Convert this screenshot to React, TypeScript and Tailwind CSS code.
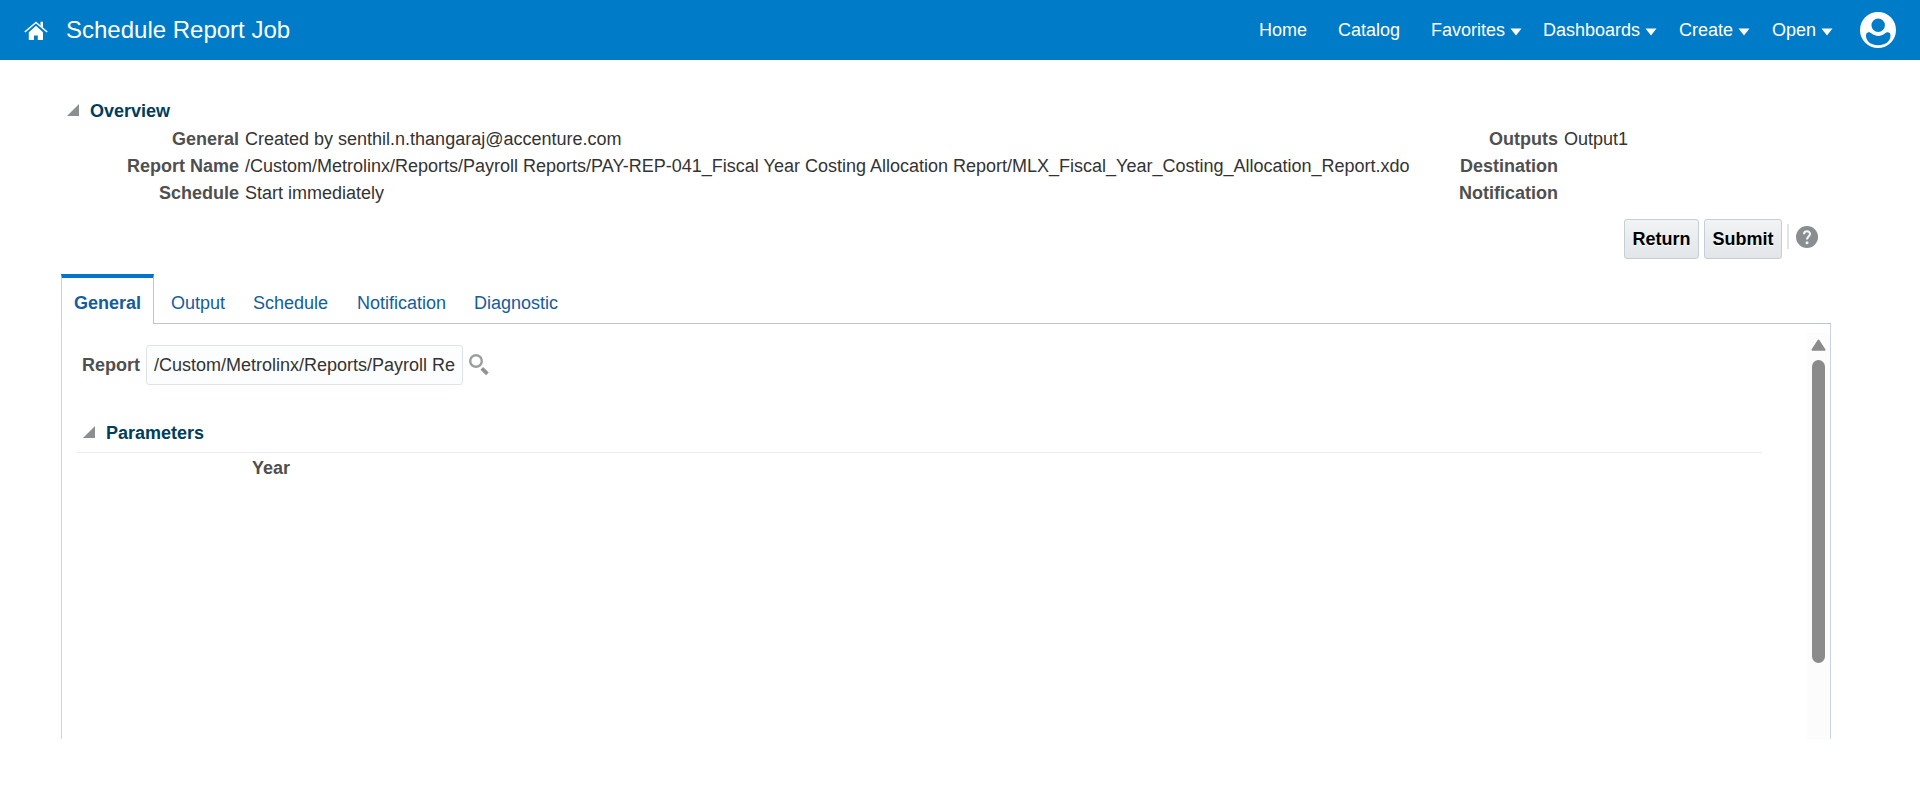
import React from "react";

const Caret = () => (
  <svg width="12" height="8" viewBox="0 0 12 8" className="mt-[3px] ml-[4.5px] shrink-0">
    <path d="M0.5 0.5H11.5L6 7.5Z" fill="#fff" />
  </svg>
);

const Disclosure = () => (
  <svg width="12" height="12" viewBox="0 0 12 12" className="shrink-0">
    <path d="M12 0V12H0Z" fill="#8b8f92" />
  </svg>
);

const NavItem = ({ label, menu, className }: { label: string; menu?: boolean; className: string }) => (
  <a className={`flex shrink-0 items-center whitespace-nowrap ${className}`}>
    {label}
    {menu && <Caret />}
  </a>
);

const Row = ({ label, value }: { label: string; value?: string }) => (
  <>
    <dt className="text-right font-bold text-[#4f4f4f]">{label}</dt>
    <dd className="whitespace-nowrap text-[#333]">{value}</dd>
  </>
);

const Tab = ({ label, className }: { label: string; className: string }) => (
  <a className={`pt-4 text-[#145c9e] ${className}`}>{label}</a>
);

export default function App() {
  return (
    <div className="h-[800px] w-[1920px] overflow-hidden bg-white font-['Liberation_Sans',Arial,sans-serif] text-[18px] leading-[27px] text-[#333]">
      <header className="flex h-[60px] items-center bg-[#007bc8] pl-6 text-white">
        <svg width="24" height="20" viewBox="0 0 24 20" className="mt-0.5 shrink-0">
          <path d="M12 4.8L19 11.2V19H13.8V14.5H10V19H4.8V11.2Z" fill="#fff" />
          <path d="M0.8 11L12 1.5L23.2 11" fill="none" stroke="#fff" strokeWidth="1.6" />
          <path d="M16.5 0.8H19V6.5L16.5 4.3Z" fill="#fff" />
        </svg>
        <h1 className="mb-0.5 ml-[18px] w-[1193px] text-[24px]">Schedule Report Job</h1>
        <NavItem label="Home" className="w-[79px]" />
        <NavItem label="Catalog" className="w-[93px]" />
        <NavItem label="Favorites" menu className="w-[112px]" />
        <NavItem label="Dashboards" menu className="w-[136px]" />
        <NavItem label="Create" menu className="w-[93px]" />
        <NavItem label="Open" menu className="w-[88px]" />
        <svg width="36" height="36" viewBox="0 0 36 36" className="shrink-0">
          <circle cx="18" cy="18" r="18" fill="#fff" />
          <circle cx="18.2" cy="13.3" r="6.7" fill="#007bc8" />
          <path d="M6 23.5C6 19.5 10 19.3 12 21.8C15.5 24.6 21 24.6 24.5 21.8C26.5 19.3 30.5 19.5 30.5 23.5C30.5 29.5 25 33.3 18.2 33.3S6 29.5 6 23.5Z" fill="#007bc8" />
        </svg>
      </header>

      <main className="pt-[38px] pr-[89px] pl-[61px]">
        <section>
          <h2 className="flex h-[27px] items-start pl-[6px] font-bold text-[#003d5b]">
            <span className="mt-[5.5px] mr-[11px]"><Disclosure /></span>
            Overview
          </h2>
          <div className="flex">
            <dl className="mt-px grid w-[1349px] grid-cols-[178px_1fr] gap-x-1.5">
              <Row label="General" value="Created by senthil.n.thangaraj@accenture.com" />
              <Row label="Report Name" value="/Custom/Metrolinx/Reports/Payroll Reports/PAY-REP-041_Fiscal Year Costing Allocation Report/MLX_Fiscal_Year_Costing_Allocation_Report.xdo" />
              <Row label="Schedule" value="Start immediately" />
            </dl>
            <dl className="mt-px grid grid-cols-[148px_1fr] gap-x-1.5">
              <Row label="Outputs" value="Output1" />
              <Row label="Destination" />
              <Row label="Notification" />
            </dl>
          </div>
        </section>

        <div className="mt-3 flex h-10 justify-end pr-[13px]">
          <button className="mr-[5px] h-10 w-[75px] rounded-[3px] border border-[#c4ced7] bg-linear-to-b from-[#f1f3f4] to-[#e2e6e9] font-bold text-black [text-shadow:0_1px_0_#fff]">Return</button>
          <button className="h-10 w-[78px] rounded-[3px] border border-[#c4ced7] bg-linear-to-b from-[#f1f3f4] to-[#e2e6e9] font-bold text-black [text-shadow:0_1px_0_#fff]">Submit</button>
          <div className="mt-[5px] mr-[7px] ml-[5px] h-[25px] w-[2px] bg-[#dfe4e7]" />
          <svg width="22" height="22" viewBox="0 0 22 22" className="mt-[7px]">
            <circle cx="11" cy="11" r="11" fill="#8a8e91" />
            <path d="M8 8.2C8 4.4 14 4.4 14 8C14 10.4 11 10.6 11 13.4" fill="none" stroke="#f4f5f5" strokeWidth="2.1" />
            <circle cx="11" cy="16.8" r="1.5" fill="#f4f5f5" />
          </svg>
        </div>

        <nav className="mt-[15px] flex h-[50px]">
          <div className="w-[93px] border-t-4 border-r border-l border-t-[#0572ce] border-r-[#bcc7d2] border-l-[#c9d3dd] pt-3 pl-[12px] font-bold text-[#145c9e]">General</div>
          <div className="flex flex-1 border-b border-[#bcc7d2]">
            <Tab label="Output" className="ml-[17px] w-[82px]" />
            <Tab label="Schedule" className="w-[104px]" />
            <Tab label="Notification" className="w-[117px]" />
            <Tab label="Diagnostic" className="" />
          </div>
        </nav>

        <section className="flex h-[415px] border-r border-l border-[#c9d6e1] pt-[9px]">
          <div className="flex-1 pl-[15px]">
            <div className="flex items-center pt-[12px] pl-[5px]">
              <label className="w-16 font-bold text-[#4f4f4f]">Report</label>
              <div className="h-10 w-[317px] overflow-hidden rounded-[3px] border border-[#dfe4e7] bg-[#fcfdfe] px-[7px] py-1.5 whitespace-nowrap">/Custom/Metrolinx/Reports/Payroll Re</div>
              <svg width="21" height="22" viewBox="0 0 21 22" className="ml-[5px]">
                <circle cx="8" cy="7" r="5.8" fill="none" stroke="#9b9ea1" strokeWidth="2.4" />
                <path d="M13.8 14.3L19.4 19.8" stroke="#8f9396" strokeWidth="3.8" />
              </svg>
            </div>
            <h2 className="mt-[35px] mr-[45px] flex h-[33px] items-start border-b border-[#ececec] pl-[6px] font-bold text-[#003d5b]">
              <span className="mt-[5.5px] mr-[11px]"><Disclosure /></span>
              Parameters
            </h2>
            <p className="mt-[2px] pl-[175px] font-bold text-[#4f4f4f]">Year</p>
          </div>
          <div className="flex w-[23px] flex-col items-center bg-[#fcfcfc] pt-1.5">
            <svg width="15" height="12" viewBox="0 0 15 12">
              <path d="M7.5 1.5L13.5 10.8H1.5Z" fill="#8b8b8b" stroke="#8b8b8b" strokeWidth="2" strokeLinejoin="round" />
            </svg>
            <div className="mt-[9px] h-[303px] w-[13px] rounded-full bg-[#8b8b8b]" />
          </div>
        </section>
      </main>
    </div>
  );
}
